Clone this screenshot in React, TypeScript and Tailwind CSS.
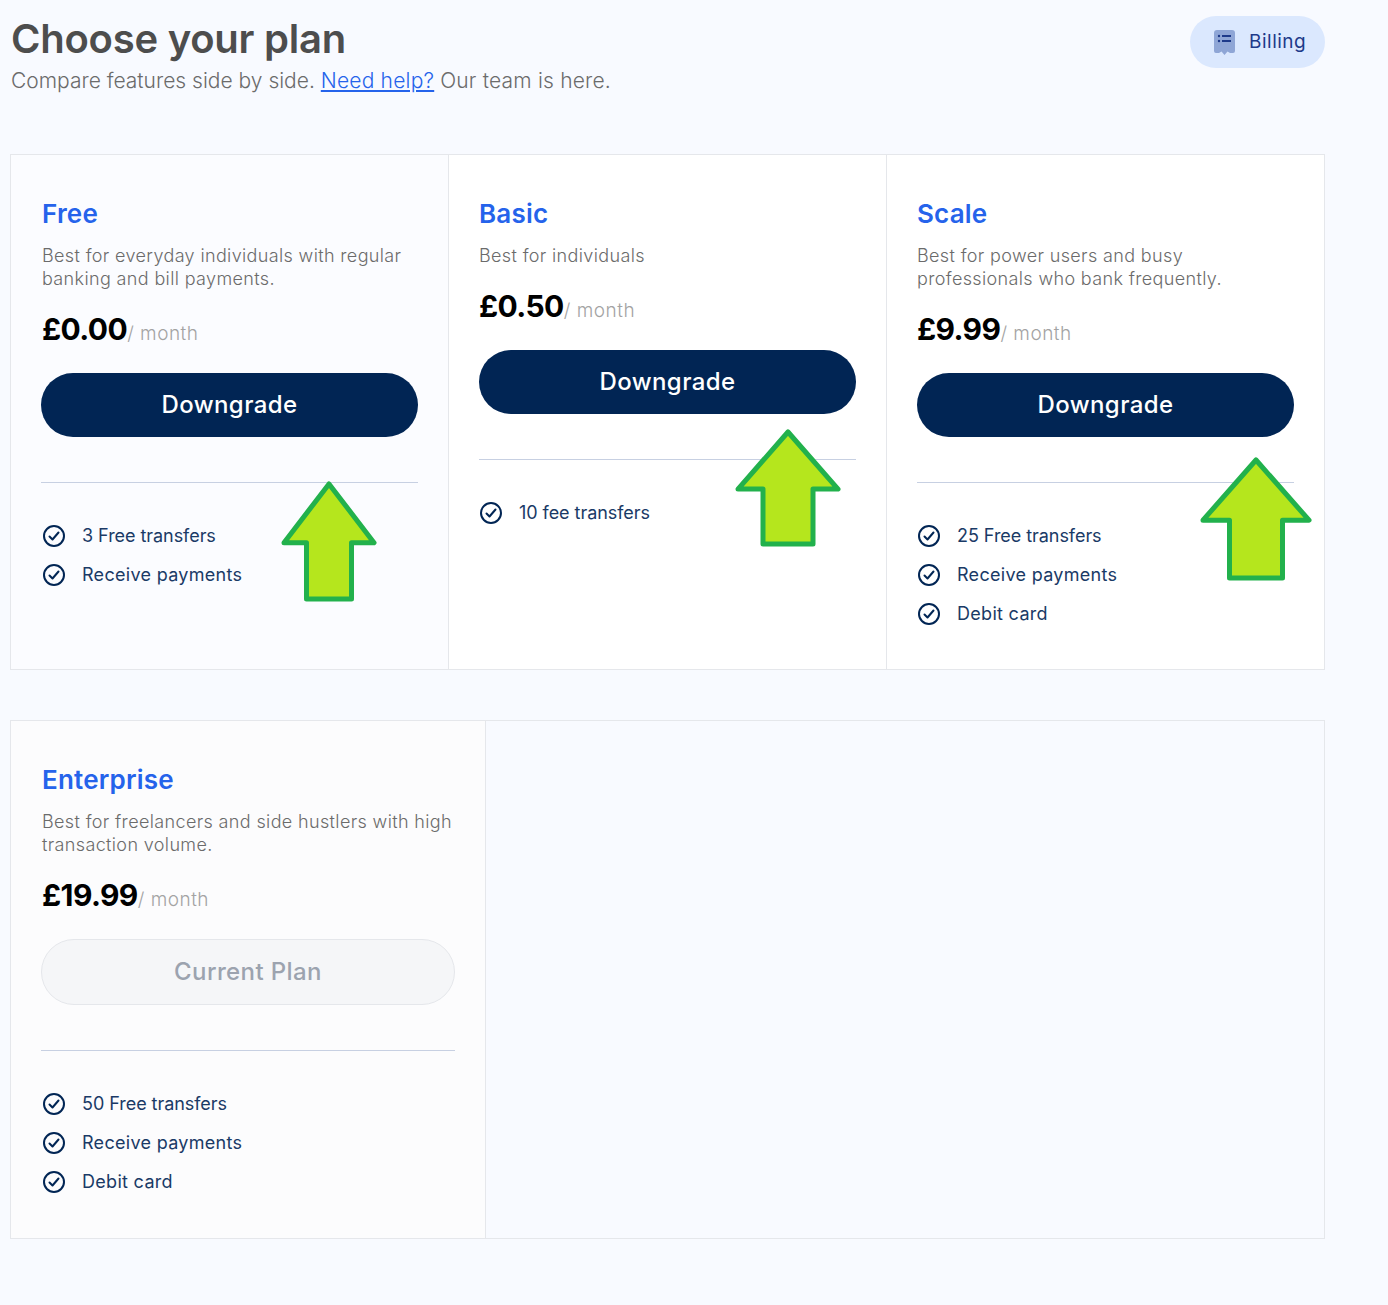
type Plan = {
  name: string;
  desc: string;
  price: string;
  features: string[];
  current?: boolean;
};

const plans: Plan[] = [
  {
    name: 'Free',
    desc: 'Best for everyday individuals with regular banking and bill payments.',
    price: '£0.00',
    features: ['3 Free transfers', 'Receive payments'],
  },
  {
    name: 'Basic',
    desc: 'Best for individuals',
    price: '£0.50',
    features: ['10 fee transfers'],
  },
  {
    name: 'Scale',
    desc: 'Best for power users and busy professionals who bank frequently.',
    price: '£9.99',
    features: ['25 Free transfers', 'Receive payments', 'Debit card'],
  },
];

const enterprise: Plan = {
  name: 'Enterprise',
  desc: 'Best for freelancers and side hustlers with high transaction volume.',
  price: '£19.99',
  features: ['50 Free transfers', 'Receive payments', 'Debit card'],
  current: true,
};

// Hand-drawn annotation arrow that sits over the card
function Arrow({ className, w, h }: { className: string; w: number; h: number }) {
  const wing = h * 0.51;
  const a = w * 0.25;
  return (
    <svg
      className={`absolute ${className}`}
      width={w + 6}
      height={h + 6}
      viewBox={`-3 -3 ${w + 6} ${h + 6}`}
    >
      <polygon
        points={`${w / 2},0 ${w},${wing} ${w - a},${wing} ${w - a},${h} ${a},${h} ${a},${wing} 0,${wing}`}
        fill="#b5e61d"
        stroke="#22b14c"
        strokeWidth="5"
        strokeLinejoin="round"
      />
    </svg>
  );
}

function CheckIcon() {
  return (
    <svg width="24" height="24" viewBox="0 0 24 24" fill="none" stroke="#012554" strokeWidth="2" className="shrink-0">
      <circle cx="12" cy="12" r="10" />
      <path d="M7.500 12.500l3 3 6-7" strokeLinecap="round" strokeLinejoin="round" />
    </svg>
  );
}

function PlanCard({
  plan,
  className,
  indent = 'pl-px',
  children,
}: {
  plan: Plan;
  className: string;
  indent?: string;
  children?: React.ReactNode;
}) {
  return (
    <div className={`relative px-[30px] pt-[43px] pb-[40px] ${className}`}>
      <h2 className={`${indent} text-[26px] leading-[32px] font-semibold tracking-[0.2px] text-[#2563eb]`}>{plan.name}</h2>
      <p className={`${indent} mt-[14px] text-[18px] leading-[23px] tracking-[0.36px] font-light text-[#6b6b6b]`}>{plan.desc}</p>
      <div className={`${indent} mt-[21px] flex items-baseline`}>
        <span className="text-[30px] leading-[36px] font-bold tracking-[-0.6px] text-black">{plan.price}</span>
        <span className="text-[19px] font-light tracking-[0.5px] text-[#a3a3a3]">/ month</span>
      </div>
      {plan.current ? (
        <button className="mt-6 h-[66px] w-full rounded-full border border-[#e5e7eb] bg-[#f3f4f6]/80 text-[24px] font-medium tracking-[0.4px] text-[#9ca3af]">
          Current Plan
        </button>
      ) : (
        <button className="mt-6 h-16 w-full rounded-full bg-[#012554] text-[24px] font-medium tracking-[0.4px] text-white">
          Downgrade
        </button>
      )}
      <div className="mt-[45px] h-px bg-[#c7d0e2]" />
      <ul className="mt-[41px] flex flex-col gap-[15px]">
        {plan.features.map((f) => (
          <li key={f} className={`${indent} flex h-6 items-center gap-[16px] text-[18px] text-[#1a3a66]`}>
            <CheckIcon />
            <span className={f.includes('transfers') ? 'tracking-[-0.05px]' : 'tracking-[0.3px]'}>{f}</span>
          </li>
        ))}
      </ul>
      {children}
    </div>
  );
}

export default function App() {
  return (
    <div className="min-h-[1305px] bg-[#f8faff] pl-[10px] [font-family:Inter,'Noto_Sans',sans-serif]">
      <div className="w-[1315px]">
        <header className="flex h-[154px] items-start justify-between">
          <div className="pt-[14px]">
            <h1 className="pl-px text-[40px] leading-[50px] font-semibold tracking-[-0.25px] text-[#4d4d4d]">Choose your plan</h1>
            <p className="mt-[2px] pl-px text-[21px] leading-[30px] font-light text-[#6b6b6b]">
              Compare features side by side.{' '}
              <a className="tracking-[0.2px] text-[#2563eb] underline" href="#help">
                Need help?
              </a>{' '}
              <span className="tracking-[0.2px]">Our team is here.</span>
            </p>
          </div>
          <div className="mt-4 flex h-[52px] w-[135px] items-center gap-[14px] rounded-full bg-[#dbe8fe] pl-6">
            <svg width="21" height="25" viewBox="0 0 21 25">
              <path
                d="M3 0h15a3 3 0 0 1 3 3v18a2 2 0 0 1-2 2h-3l-2.500-1.500-3 3.500-3-3.500L5 23H2a2 2 0 0 1-2-2V3a3 3 0 0 1 3-3z"
                fill="#8fa6d6"
              />
              <circle cx="5" cy="6" r="1.200" fill="#1e3a8a" />
              <circle cx="5" cy="11" r="1.200" fill="#1e3a8a" />
              <rect x="8" y="5" width="9" height="2" fill="#1e3a8a" />
              <rect x="8" y="10" width="9" height="2" fill="#1e3a8a" />
            </svg>
            <span className="pt-px text-[19px] tracking-[0.5px] text-[#1e3a8a]">Billing</span>
          </div>
        </header>

        <section className="grid h-[516px] grid-cols-[437px_438px_438px] border border-[#e5e7eb]">
          <PlanCard plan={plans[0]} className="bg-[#fbfcff]">
            <Arrow className="left-[270px] top-[326px]" w={90} h={115} />
          </PlanCard>
          <PlanCard plan={plans[1]} indent="pl-0" className="border-l border-[#e5e7eb] bg-white">
            <Arrow className="left-[286px] top-[274px]" w={100} h={112} />
          </PlanCard>
          <PlanCard plan={plans[2]} indent="pl-0" className="border-l border-[#e5e7eb] bg-white">
            <Arrow className="left-[313px] top-[302px]" w={106} h={118} />
          </PlanCard>
        </section>

        <section className="mt-[50px] flex h-[519px] border border-[#e5e7eb]">
          <PlanCard plan={enterprise} className="w-[475px] border-r border-[#e5e7eb] bg-[#fcfcfd]" />
        </section>
      </div>
    </div>
  );
}
